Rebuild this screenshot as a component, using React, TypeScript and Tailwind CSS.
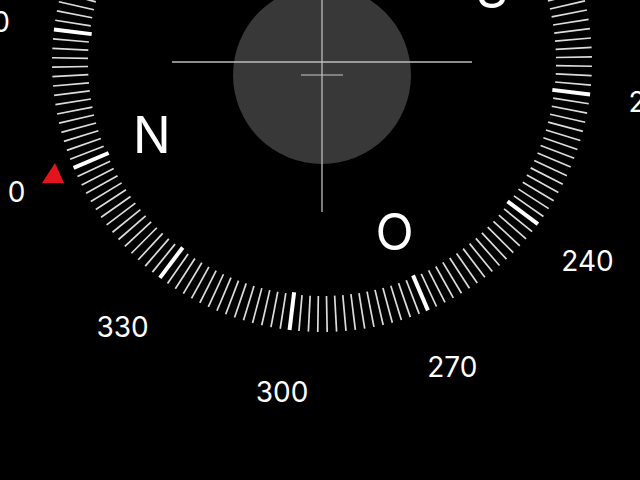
const CX = 322;
const CY = 62;
// heading 0 sits at this screen angle (degrees, clockwise from +x)
const OFFSET = -203.1;

const rad = (deg: number) => (deg * Math.PI) / 180;

function polar(r: number, heading: number) {
  const a = rad(heading + OFFSET);
  return { x: CX + r * Math.cos(a), y: CY + r * Math.sin(a) };
}

const ticks = Array.from({ length: 180 }, (_, i) => i * 2);
const numbers = [0, 30, 60, 90, 120, 150, 180, 210, 240, 270, 300, 330];
const cardinals = [
  { h: 0, l: 'N' },
  { h: 90, l: 'E' },
  { h: 180, l: 'S' },
  { h: 270, l: 'O' },
];

export default function App() {
  return (
    <div className="w-full h-screen bg-black overflow-hidden">
      <svg
        width={640}
        height={480}
        viewBox="0 0 640 480"
        className="block font-['Inter','Noto_Sans',sans-serif]"
      >
        {/* level bubble */}
        <circle cx={322} cy={75} r={89} fill="#383838" />
        <line x1={301} y1={75} x2={343} y2={75} stroke="#c8c8c8" strokeWidth={1.2} />

        {/* crosshair */}
        <line x1={172} y1={62} x2={472} y2={62} stroke="#bdbdbd" strokeWidth={1.3} />
        <line x1={322} y1={-88} x2={322} y2={212} stroke="#bdbdbd" strokeWidth={1.3} />

        {/* dial ticks */}
        {ticks.map((h) => {
          const major = h % 30 === 0;
          const a = polar(major ? 232 : 234, h);
          const b = polar(270, h);
          return (
            <line
              key={h}
              x1={a.x}
              y1={a.y}
              x2={b.x}
              y2={b.y}
              stroke={major ? '#ffffff' : '#dcdcdc'}
              strokeWidth={major ? 4 : 1.7}
            />
          );
        })}

        {/* north marker */}
        <polygon points="55,163 42,183 64,183" fill="#e3141b" />

        {/* degree labels */}
        {numbers.map((h) => {
          const p = polar(332, h);
          return (
            <text
              key={h}
              x={p.x}
              y={p.y}
              textAnchor="middle"
              dominantBaseline="central"
              fill="#ffffff"
              fontSize={28}
            >
              {h}
            </text>
          );
        })}

        {/* cardinal letters */}
        {cardinals.map(({ h, l }) => {
          const p = polar(185, h);
          return (
            <text
              key={l}
              x={p.x}
              y={p.y}
              textAnchor="middle"
              dominantBaseline="central"
              fill="#ffffff"
              fontSize={50}
            >
              {l}
            </text>
          );
        })}
      </svg>
    </div>
  );
}
